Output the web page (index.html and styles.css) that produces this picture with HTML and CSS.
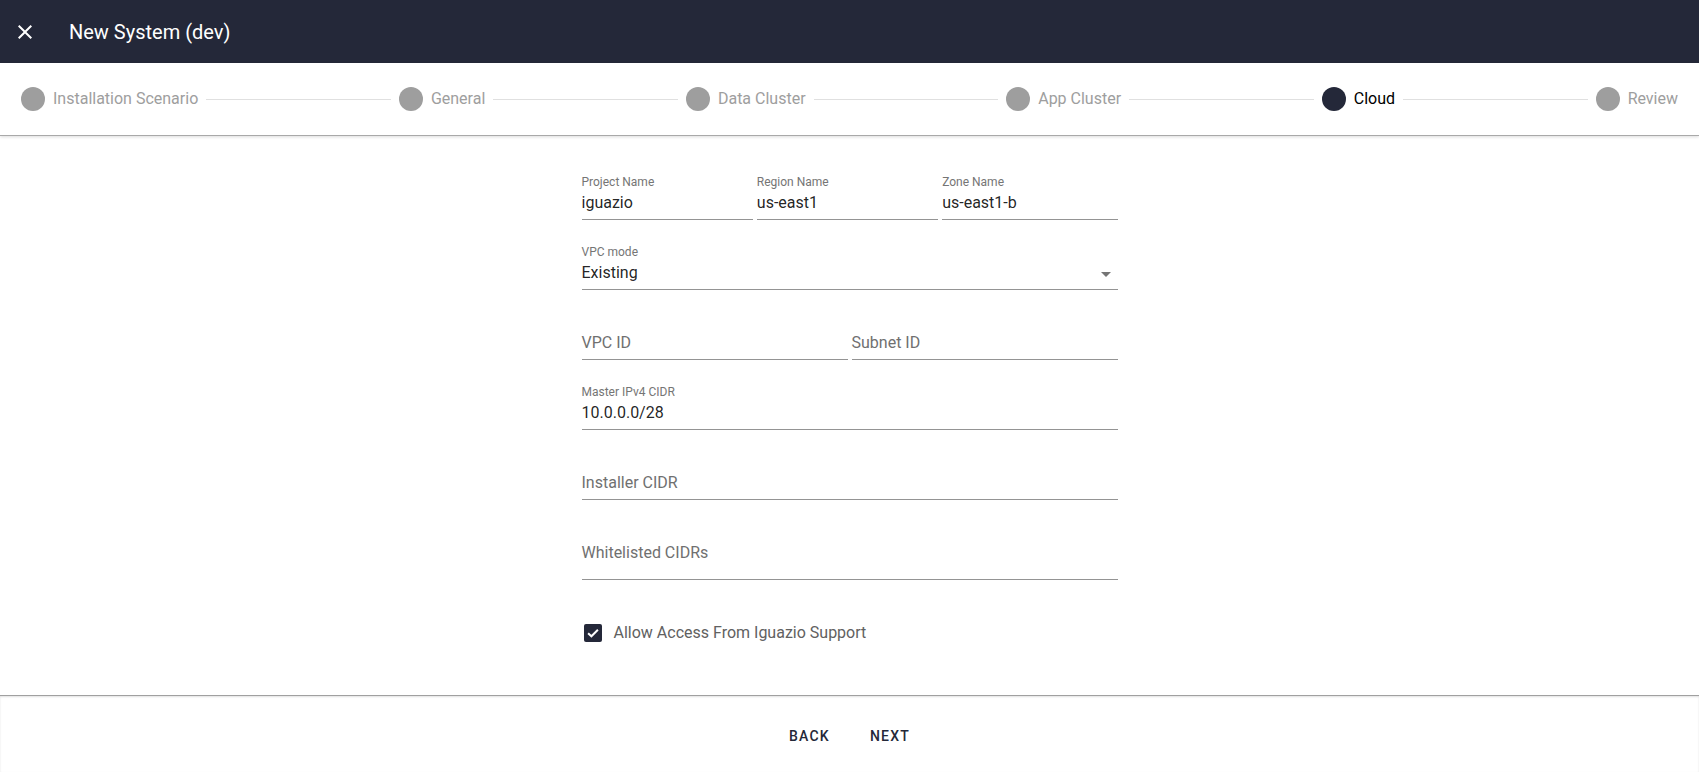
FILE: index.html
```html
<!DOCTYPE html>
<html lang="en">
<head>
<meta charset="utf-8">
<title>New System (dev)</title>
<link rel="stylesheet" href="styles.css">
</head>
<body>
<div class="page">
  <header class="topbar">
    <button class="close-btn" aria-label="Close">
      <svg width="24" height="24" viewBox="0 0 24 24"><path fill="#ffffff" d="M19 6.41L17.59 5 12 10.59 6.41 5 5 6.41 10.59 12 5 17.59 6.41 19 12 13.41 17.59 19 19 17.59 13.41 12z"/></svg>
    </button>
    <h1 class="title">New System (dev)</h1>
  </header>

  <nav class="stepper">
    <div class="step"><span class="dot"></span><span class="step-label">Installation Scenario</span></div>
    <div class="step-line"></div>
    <div class="step"><span class="dot"></span><span class="step-label">General</span></div>
    <div class="step-line"></div>
    <div class="step"><span class="dot"></span><span class="step-label">Data Cluster</span></div>
    <div class="step-line"></div>
    <div class="step"><span class="dot"></span><span class="step-label">App Cluster</span></div>
    <div class="step-line"></div>
    <div class="step step-active"><span class="dot"></span><span class="step-label">Cloud</span></div>
    <div class="step-line"></div>
    <div class="step"><span class="dot"></span><span class="step-label">Review</span></div>
  </nav>

  <main class="content">
    <form class="form">
      <div class="row row-3">
        <div class="field">
          <div class="field-label">Project Name</div>
          <div class="field-value">iguazio</div>
        </div>
        <div class="field">
          <div class="field-label">Region Name</div>
          <div class="field-value">us-east1</div>
        </div>
        <div class="field">
          <div class="field-label">Zone Name</div>
          <div class="field-value">us-east1-b</div>
        </div>
      </div>

      <div class="row">
        <div class="field field-select">
          <div class="field-label">VPC mode</div>
          <div class="field-value">Existing</div>
          <span class="select-arrow"></span>
        </div>
      </div>

      <div class="row row-2">
        <div class="field">
          <div class="field-label"></div>
          <div class="field-value placeholder">VPC ID</div>
        </div>
        <div class="field">
          <div class="field-label"></div>
          <div class="field-value placeholder">Subnet ID</div>
        </div>
      </div>

      <div class="row">
        <div class="field">
          <div class="field-label">Master IPv4 CIDR</div>
          <div class="field-value">10.0.0.0/28</div>
        </div>
      </div>

      <div class="row">
        <div class="field">
          <div class="field-label"></div>
          <div class="field-value placeholder">Installer CIDR</div>
        </div>
      </div>

      <div class="row">
        <div class="field">
          <div class="field-label"></div>
          <div class="field-value field-textarea placeholder">Whitelisted CIDRs</div>
        </div>
      </div>

      <label class="checkbox-row">
        <span class="checkbox">
          <svg width="18" height="18" viewBox="0 0 18 18"><path d="M4.1 9.2 L7.4 12.3 L13.9 5.8" fill="none" stroke="#ffffff" stroke-width="2"/></svg>
        </span>
        <span class="checkbox-label">Allow Access From Iguazio Support</span>
      </label>
    </form>
  </main>

  <footer class="footer">
    <button class="text-btn">Back</button>
    <button class="text-btn">Next</button>
  </footer>
</div>
</body>
</html>
```

FILE: styles.css
```css
* {
  box-sizing: border-box;
}

html, body {
  margin: 0;
  padding: 0;
  height: 100%;
}

body {
  font-family: Roboto, "Liberation Sans", Arial, sans-serif;
  background: #ffffff;
  color: rgba(0, 0, 0, 0.87);
  overflow: hidden;
}

.page {
  display: flex;
  flex-direction: column;
  height: 772px;
}

/* Top bar */
.topbar {
  height: 63px;
  flex: 0 0 63px;
  background: #242839;
  display: flex;
  align-items: center;
  padding-left: 13px;
  gap: 32px;
}

.close-btn {
  width: 24px;
  height: 24px;
  padding: 0;
  border: 0;
  background: transparent;
  display: flex;
  align-items: center;
  justify-content: center;
  cursor: pointer;
}

.title {
  margin: 0;
  font-size: 20px;
  font-weight: 400;
  color: #ffffff;
  line-height: 24px;
}

/* Stepper */
.stepper {
  flex: 0 0 73px;
  height: 73px;
  display: flex;
  align-items: center;
  padding: 0 21px;
  border-bottom: 1px solid #a9a9a9;
  box-shadow: 0 1px 3px rgba(0, 0, 0, 0.14);
  position: relative;
  z-index: 1;
}

.step {
  display: flex;
  align-items: center;
  gap: 8px;
  flex: 0 0 auto;
}

.dot {
  width: 24px;
  height: 24px;
  border-radius: 50%;
  background: #9e9e9e;
}

.step-label {
  font-size: 16px;
  line-height: 20px;
  color: #9e9e9e;
  white-space: nowrap;
}

.step-active .dot {
  background: #242839;
}

.step-active .step-label {
  color: #000000;
}

.step-line {
  flex: 1 1 auto;
  height: 1px;
  background: #e0e0e0;
  margin: 0 8px;
}

/* Content */
.content {
  flex: 1 1 auto;
  overflow: hidden;
}

.form {
  width: 536px;
  margin: 0 auto;
  padding-top: 39px;
  display: flex;
  flex-direction: column;
  gap: 25px;
}

.row {
  display: grid;
  grid-template-columns: 1fr;
}

.row-3 {
  grid-template-columns: 171fr 181fr 175fr;
  column-gap: 4px;
}

.row-2 {
  grid-template-columns: 1fr 1fr;
  column-gap: 4px;
}

.field {
  position: relative;
  border-bottom: 1px solid #949494;
  padding-bottom: 6px;
}

.field-label {
  height: 14px;
  font-size: 12px;
  line-height: 14px;
  color: #757575;
  margin-bottom: 4px;
}

.field-value {
  height: 20px;
  font-size: 16px;
  line-height: 20px;
  color: rgba(0, 0, 0, 0.87);
  white-space: nowrap;
}

.field-value.placeholder {
  color: #707070;
}

.field-textarea {
  height: 30px;
}

.select-arrow {
  position: absolute;
  right: 7px;
  top: 27px;
  width: 0;
  height: 0;
  border-left: 5px solid transparent;
  border-right: 5px solid transparent;
  border-top: 5px solid #757575;
}

.checkbox-row {
  display: flex;
  align-items: center;
  gap: 12px;
  margin-top: 19px;
  padding-left: 2px;
  cursor: pointer;
}

.checkbox {
  width: 18px;
  height: 18px;
  border-radius: 2px;
  background: #242839;
  display: flex;
}

.checkbox-label {
  font-size: 16px;
  line-height: 18px;
  color: #616161;
}

/* Footer */
.footer {
  flex: 0 0 77px;
  height: 77px;
  border-top: 1px solid #a0a0a0;
  box-shadow: inset 0 1px 2px rgba(0, 0, 0, 0.12);
  display: flex;
  justify-content: center;
  align-items: flex-start;
  gap: 8px;
  padding-top: 22px;
}

.text-btn {
  height: 36px;
  padding: 0 16px;
  border: 0;
  background: transparent;
  font-family: Roboto, "Liberation Sans", Arial, sans-serif;
  font-size: 14px;
  font-weight: 500;
  letter-spacing: 1.25px;
  text-transform: uppercase;
  color: #242839;
  cursor: pointer;
}
```
